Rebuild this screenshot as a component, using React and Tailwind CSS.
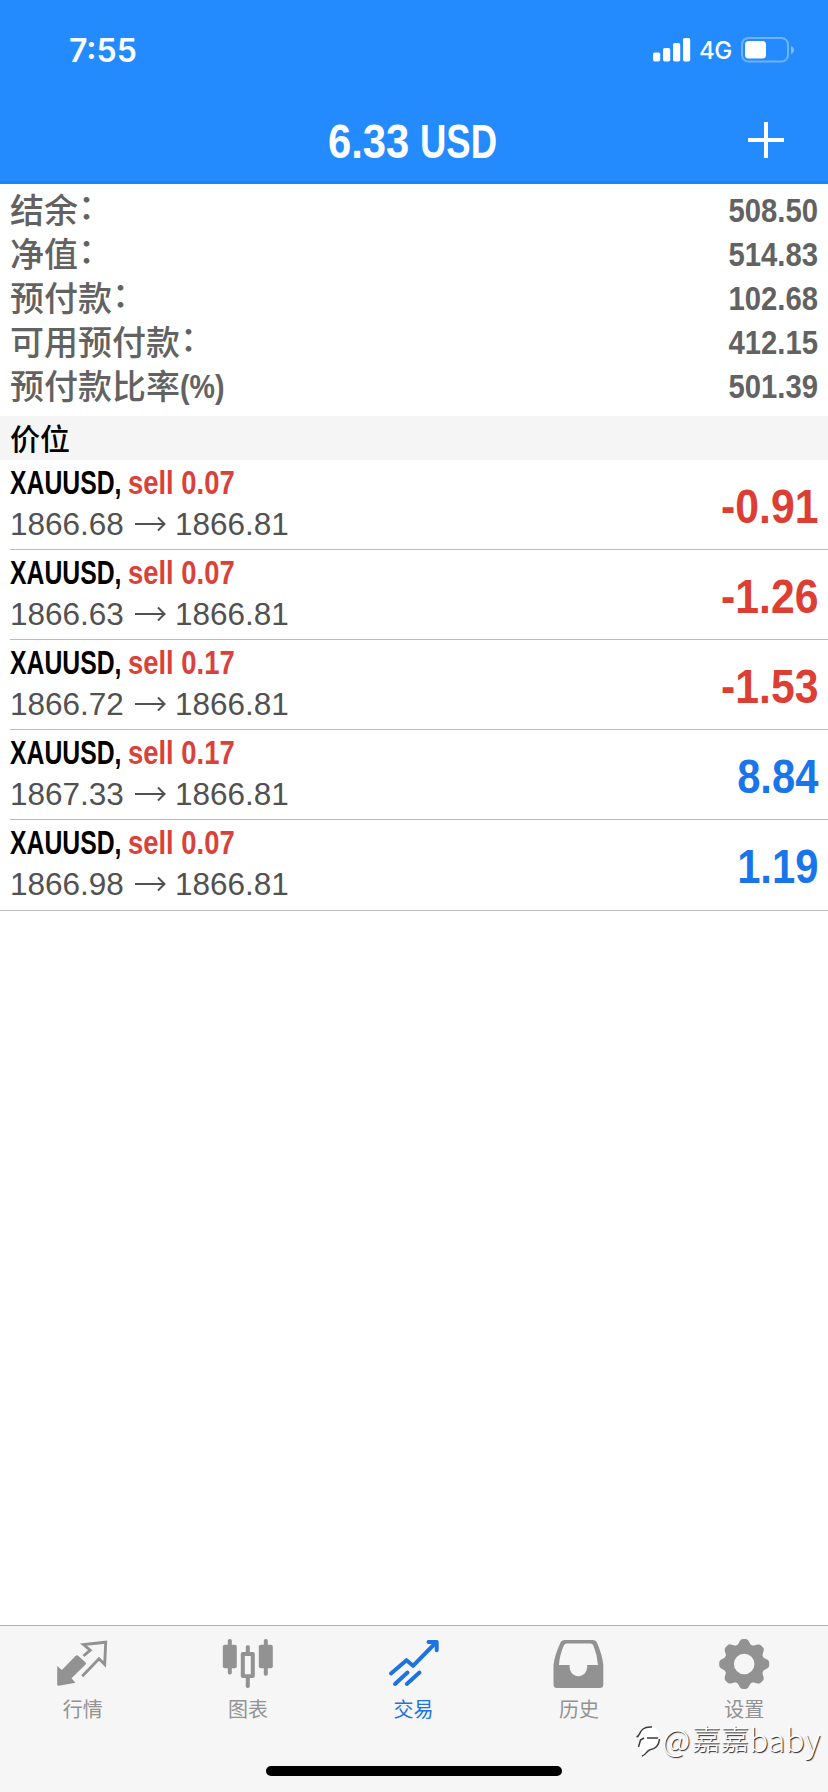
const summary = [
  { label: '结余', colon: true, value: '508.50' },
  { label: '净值', colon: true, value: '514.83' },
  { label: '预付款', colon: true, value: '102.68' },
  { label: '可用预付款', colon: true, value: '412.15' },
  { label: '预付款比率', suffix: '(%)', value: '501.39' },
];

const trades = [
  { volume: '0.07', open: '1866.68', now: '1866.81', profit: '-0.91' },
  { volume: '0.07', open: '1866.63', now: '1866.81', profit: '-1.26' },
  { volume: '0.17', open: '1866.72', now: '1866.81', profit: '-1.53' },
  { volume: '0.17', open: '1867.33', now: '1866.81', profit: '8.84' },
  { volume: '0.07', open: '1866.98', now: '1866.81', profit: '1.19' },
];

function StatusBar() {
  return (
    <div className="flex h-[99px] items-center justify-between pl-[69px] pr-[33px] text-white">
      <span className="pt-[2px] font-['Inter',sans-serif] text-[32px] leading-none font-semibold">7:55</span>
      <div className="flex items-center">
        <svg className="h-[24px] w-[38px]" viewBox="0 0 38 24" fill="#fff">
          <rect x="0" y="14.5" width="7.2" height="9" rx="1.8" />
          <rect x="10" y="10" width="7.2" height="13.5" rx="1.8" />
          <rect x="20" y="5" width="7.2" height="18.5" rx="1.8" />
          <rect x="30" y="0" width="7.2" height="23.5" rx="1.8" />
        </svg>
        <span className="ml-[8px] w-[42px] pt-[2px] font-['Inter',sans-serif] text-[24px] leading-none font-medium tracking-[-0.5px]">4G</span>
        <svg className="h-[26px] w-[54px]" viewBox="0 0 54 26">
          <rect x="1" y="1" width="46" height="23.5" rx="6.5" fill="none" stroke="#6fb3ff" strokeWidth="2" />
          <rect x="4" y="4" width="21" height="17.5" rx="3.5" fill="#fff" />
          <path d="M50 9c4 1.500 4 6.500 0 8z" fill="#7fbcff" />
        </svg>
      </div>
    </div>
  );
}

function Header() {
  return (
    <header className="h-[184px] shrink-0 border-b-[3px] border-[#1b85fa] bg-[#248bff]">
      <StatusBar />
      <div className="grid h-[82px] grid-cols-[1fr_auto_1fr] items-center pr-[44px] pl-[42px]">
        <span />
        <h1 className="flex w-[172px] pt-[4px] pl-[1px] font-['Liberation_Sans',sans-serif] text-[48px] leading-none font-bold whitespace-nowrap text-white">
          <span className="w-[92px] origin-left scale-x-[0.87]">6.33</span>
          <span className="w-[76px] origin-left scale-x-[0.76]">USD</span>
        </h1>
        <svg className="h-[36px] w-[36px] justify-self-end" viewBox="0 0 36 36">
          <path d="M18 0V36M0 18H36" stroke="#fff" strokeWidth="4" />
        </svg>
      </div>
    </header>
  );
}

function SummaryRow({ label, colon, suffix, value }) {
  return (
    <div className="flex h-[44px] items-center justify-between pr-[10px] pl-[10px] text-[#626262]">
      <span className="flex items-center pb-[3px] font-['Noto_Sans_CJK_SC',sans-serif] text-[34px] leading-[36px] font-medium">
        {label}
        {colon && <span className="-translate-y-[4px]">：</span>}
        {suffix && <span className="origin-left scale-x-[0.84] pt-[3px] font-['Liberation_Sans',sans-serif] text-[34px] font-bold">{suffix}</span>}
      </span>
      <span className="origin-right scale-x-[0.86] font-['Liberation_Sans',sans-serif] text-[34px] leading-none font-bold">{value}</span>
    </div>
  );
}

function TradeRow({ volume, open, now, profit, last }) {
  const color = profit.startsWith('-') ? 'text-[#dc3e33]' : 'text-[#1a75ea]';
  return (
    <div className={last ? 'h-[91px] border-b border-[#bcbcbe]' : 'ml-[10px] h-[90px] border-b border-[#bcbcbe]'}>
      <div className={last ? 'flex h-full justify-between pr-[10px] pl-[10px]' : 'flex h-full justify-between pr-[10px]'}>
        <div className="pt-[5px] font-['Liberation_Sans',sans-serif]">
          <p className="flex text-[33px] leading-[36px] font-bold whitespace-nowrap text-black">
            <span className="w-[118px] origin-left scale-x-[0.75]">XAUUSD,</span>
            <span className="origin-left scale-x-[0.83] text-[#d8423a]">sell {volume}</span>
          </p>
          <p className="flex items-center pt-[5px] text-[31.5px] leading-[36px] text-[#515151]">
            <span className="w-[125px]">{open}</span>
            <svg className="h-[16px] w-[31px]" viewBox="0 0 31 16" fill="none" stroke="#515151" strokeWidth="2">
              <path d="M0 8H29.500M23 1.500L29.500 8L23 14.500" />
            </svg>
            <span className="pl-[9px]">{now}</span>
          </p>
        </div>
        <div className={`flex items-center pt-[4px] font-['Liberation_Sans',sans-serif] text-[48px] leading-none font-bold ${color}`}>
          <span className={profit.startsWith('-') ? 'origin-right scale-x-[0.89]' : 'origin-right scale-x-[0.87]'}>{profit}</span>
        </div>
      </div>
    </div>
  );
}

function QuotesIcon() {
  return (
    <svg className="h-[52px] w-[52px]" viewBox="0 0 52 52">
      <path d="M0.200 28L4.900 32L18.500 18Q20 16.600 21.500 18L28.600 24.500Q29.500 25.500 28.600 26.500L14.500 40.300L18.500 44.700L1.800 47.800Q0.200 47.800 0.200 46.200Z" fill="#929292" />
      <path d="M26.500 18L33.200 12.200L26.500 6.500L48.700 4.200L47.700 26.500L42 20.800L25.200 38.200" fill="none" stroke="#929292" strokeWidth="2.900" />
    </svg>
  );
}

function ChartIcon() {
  return (
    <svg className="h-[52px] w-[52px]" viewBox="0 0 52 52" fill="#929292">
      <rect x="0.800" y="6.700" width="14" height="23.500" rx="2" />
      <rect x="5.800" y="1" width="4" height="35.500" rx="1.800" />
      <rect x="36.800" y="6.700" width="14" height="23.500" rx="2" />
      <rect x="41.800" y="1" width="4" height="36.800" rx="1.800" />
      <path fillRule="evenodd" d="M20.800 14H30.800Q32.800 14 32.800 16V38Q32.800 40 30.800 40H20.800Q18.800 40 18.800 38V16Q18.800 14 20.800 14ZM22.800 18V36.200H28.800V18Z" />
      <rect x="23.800" y="7.300" width="4" height="8" rx="1.500" />
      <rect x="23.800" y="38" width="4" height="12" rx="1.800" />
    </svg>
  );
}

function TradeIcon() {
  return (
    <svg className="h-[52px] w-[52px]" viewBox="0 0 52 52" fill="none" stroke="#1f73e0" strokeWidth="4" strokeLinecap="round" strokeLinejoin="round">
      <path d="M3 35.500L18.500 22.200L25 27.800L47.500 5" />
      <path d="M40.500 4H48.700V12.200" />
      <path d="M7 46L19.500 34.500M18.800 46L31.500 34.500" />
    </svg>
  );
}

function HistoryIcon() {
  return (
    <svg className="h-[52px] w-[52px]" viewBox="0 0 52 52">
      <path fillRule="evenodd" fill="#929292" d="M12 2H39.500Q43 2 44.200 5.200Q49.500 17.500 50.300 27V46.500Q50.300 50 46.800 50H4Q0.500 50 0.500 46.500V27Q1.500 17.500 7.200 5.200Q8.400 2 12 2ZM14 5.500Q11.700 5.500 10.800 7.600Q6.500 17.500 6 26.900H16.600V29.800C17.500 35 20.800 38.200 25.400 38.200C30 38.200 33.300 35 34.200 29.800V26.900H45Q44.400 17.500 40.400 7.600Q39.500 5.500 37.300 5.500Z" />
    </svg>
  );
}

function SettingsIcon() {
  const tooth = 'M17.500 10C20 7 20.500 5 22 2.700Q23 1 25 1H27.500Q29.500 1 30.500 2.700C32 5 32.500 7 35 10Z';
  return (
    <svg className="h-[52px] w-[52px]" viewBox="0 0 52 52">
      <g fill="#929292">
        {[0, 45, 90, 135, 180, 225, 270, 315].map((angle) => (
          <path key={angle} d={tooth} transform={`rotate(${angle} 26.2 26)`} />
        ))}
      </g>
      <circle cx="26.200" cy="26" r="15.300" fill="none" stroke="#929292" strokeWidth="10" />
    </svg>
  );
}

const tabs = [
  { label: '行情', Icon: QuotesIcon },
  { label: '图表', Icon: ChartIcon },
  { label: '交易', Icon: TradeIcon, active: true },
  { label: '历史', Icon: HistoryIcon },
  { label: '设置', Icon: SettingsIcon },
];

function Watermark() {
  return (
    <div className="absolute top-[92px] right-[8px] flex h-[40px] items-center">
      <svg className="mt-[6px] h-[34px] w-[28px]" viewBox="0 0 28 34">
        <path d="M3 12C5 5 11 1 17 2C24 4 27 10 26 16C25 23 21 27 15 27L8 32L9 26L4 24L6 16L2 14Z" fill="#fff" />
        <path d="M2.500 13C6 12 5 8 9 5Q12 2.500 18 3M4.500 23L6.500 16L10 14M13 14H24M25.500 15C25 21 22 25 15.500 26C12 27.500 12 31 8 32" fill="none" stroke="#3d3d3d" strokeWidth="1.500" />
      </svg>
      <span className="flex items-center leading-none font-light whitespace-nowrap text-white [text-shadow:1px_1px_1px_#222]">
        <span className="w-[30px] font-['Noto_Sans_CJK_SC',sans-serif] text-[31px]">@</span>
        <span className="font-['Noto_Sans_CJK_SC',sans-serif] text-[28.5px]">嘉嘉</span>
        <span className="w-[71px] font-['Noto_Sans_CJK_SC',sans-serif] text-[32px]">baby</span>
      </span>
    </div>
  );
}

function TabBar() {
  return (
    <footer className="relative mt-auto flex h-[167px] shrink-0 flex-col items-center border-t border-[#b0b0b2] bg-[#f6f6f6]">
      <nav className="flex h-[140px] w-full pt-[12px] pr-[1px]">
        {tabs.map(({ label, Icon, active }) => (
          <div key={label} className="flex flex-1 flex-col items-center">
            <Icon />
            <span className={`pt-[7px] font-['Noto_Sans_CJK_SC',sans-serif] text-[20px] leading-[24px] ${active ? 'text-[#1f73e0]' : 'text-[#929292]'}`}>{label}</span>
          </div>
        ))}
      </nav>
      <div className="h-[10px] w-[296px] rounded-full bg-black" />
      <Watermark />
    </footer>
  );
}

export default function App() {
  return (
    <div className="flex h-[1792px] w-[828px] flex-col overflow-hidden bg-white">
      <Header />
      <section className="h-[232px] shrink-0 pt-[4px]">
        {summary.map((row) => <SummaryRow key={row.label} {...row} />)}
      </section>
      <h2 className="h-[44px] shrink-0 bg-[#f5f5f5] pl-[10px] font-['Noto_Sans_CJK_SC',sans-serif] text-[30px] leading-[42px] font-medium text-black">价位</h2>
      <section>
        {trades.map((trade, i) => <TradeRow key={trade.open} {...trade} last={i === trades.length - 1} />)}
      </section>
      <TabBar />
    </div>
  );
}
